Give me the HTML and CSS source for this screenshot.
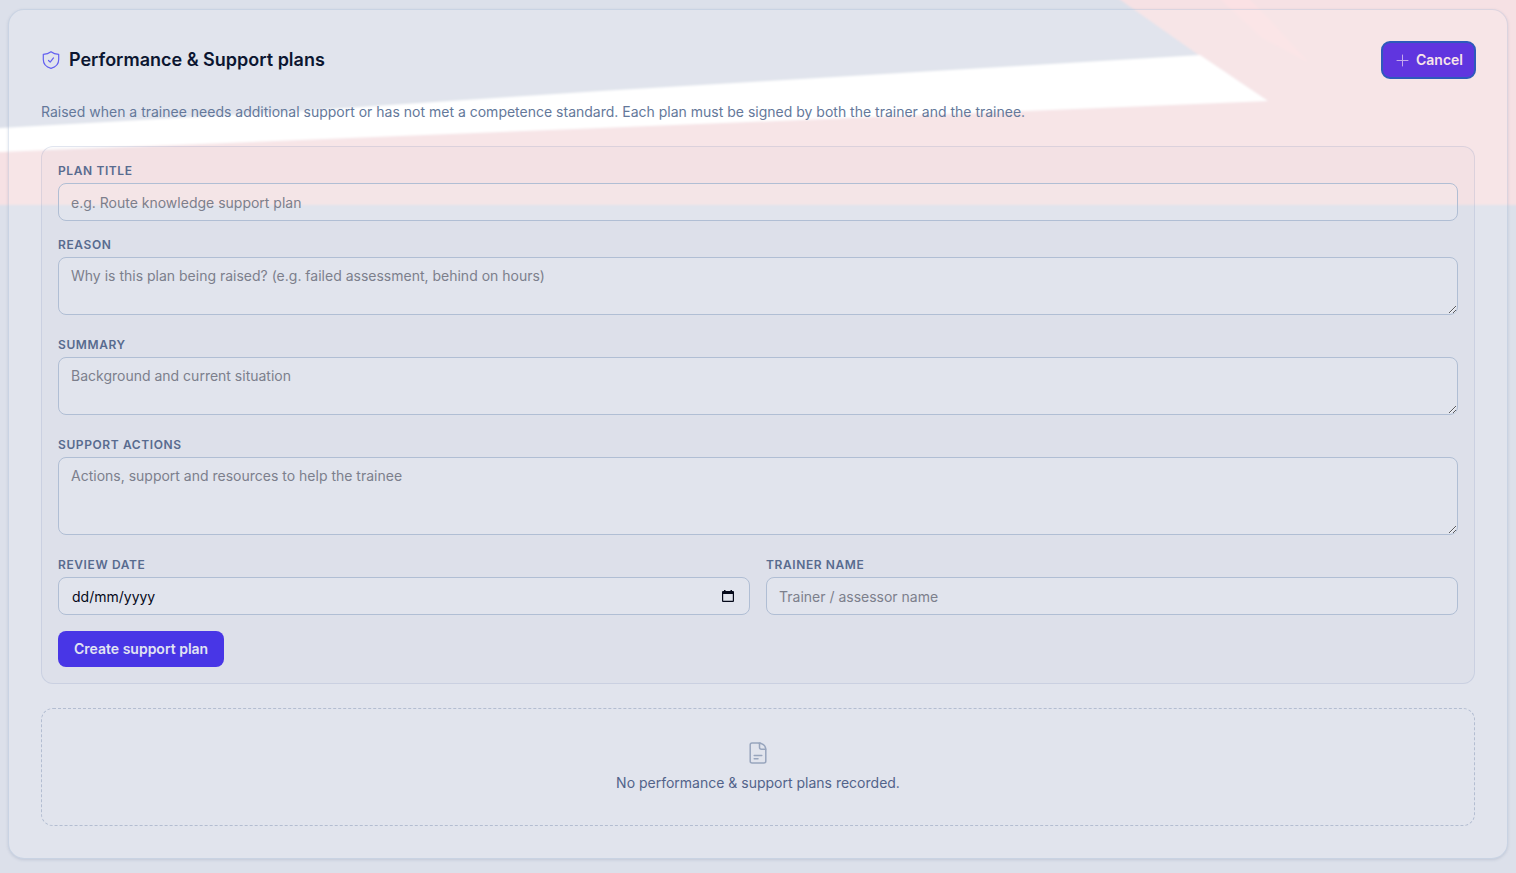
FILE: index.html
```
<!DOCTYPE html>
<html lang="en-GB">
<head>
    <meta charset="UTF-8">
    <meta name="viewport" content="width=device-width, initial-scale=1.0">
    <title>Performance &amp; Support plans</title>
    <link rel="stylesheet" href="styles.css">
</head>
<body>
    <!-- Flag backdrop -->
    <svg class="backdrop" viewBox="0 0 1516 210" preserveAspectRatio="none" aria-hidden="true">
        <defs>
            <filter id="soften" x="-5%" y="-5%" width="110%" height="110%">
                <feGaussianBlur stdDeviation="1"/>
            </filter>
        </defs>
        <g filter="url(#soften)">
            <path fill="#f6e1e4" d="M-20 152 600 127 1100 107 1240 85 1200 56 1112-6H1540V205H-20Z"/>
            <path fill="#fbe1e4" d="M1215-6H1244L1270 20 1308 62 1262 38Z"/>
            <path fill="#fff" d="M-20 129 0 128 300 111 600 91 900 73 1200 55 1268 101 1100 108 900 116 600 128 300 140 0 152-20 153Z"/>
        </g>
    </svg>

    <main class="card">
        <header class="card-header">
            <h1>
                <svg class="shield" viewBox="0 0 20 20" fill="none" stroke="currentColor" stroke-width="1.200" stroke-linecap="round" stroke-linejoin="round" aria-hidden="true">
                    <path d="M10 1.800C7.800 3.600 5.200 4.300 2.300 4.300V9.600C2.300 14 5.400 17.200 10 18.300 14.600 17.200 17.700 14 17.700 9.600V4.300C14.800 4.300 12.200 3.600 10 1.800Z"/>
                    <path d="M7.500 10.500 9.200 12.200 12.500 7.900"/>
                </svg>
                Performance &amp; Support plans
            </h1>
            <button type="button" class="btn btn-cancel">
                <svg viewBox="0 0 16 16" fill="none" stroke="currentColor" stroke-width="1" stroke-linecap="round" aria-hidden="true">
                    <path d="M8.500 3V14M3 8.500H14"/>
                </svg>
                Cancel
            </button>
        </header>

        <p class="intro">Raised when a trainee needs additional support or has not met a competence standard. Each plan must be signed by both the trainer and the trainee.</p>

        <!-- New plan form -->
        <form class="plan-form">
            <div class="field">
                <label for="title">Plan title</label>
                <input type="text" id="title" placeholder="e.g. Route knowledge support plan">
            </div>
            <div class="field field-area">
                <label for="reason">Reason</label>
                <textarea id="reason" rows="2" placeholder="Why is this plan being raised? (e.g. failed assessment, behind on hours)"></textarea>
            </div>
            <div class="field field-area">
                <label for="summary">Summary</label>
                <textarea id="summary" rows="2" placeholder="Background and current situation"></textarea>
            </div>
            <div class="field field-area">
                <label for="actions">Support actions</label>
                <textarea id="actions" rows="3" placeholder="Actions, support and resources to help the trainee"></textarea>
            </div>
            <div class="columns">
                <div class="field">
                    <label for="review">Review date</label>
                    <div class="date-box">
                        <input type="text" id="review" placeholder="dd/mm/yyyy" inputmode="numeric">
                        <button type="button" aria-label="Choose date">
                            <svg viewBox="0 0 14 14" aria-hidden="true">
                                <path fill="currentColor" fill-rule="evenodd" d="M3 1H4.500V2H9.500V1H11V2H12Q13 2 13 3V12Q13 13 12 13H2Q1 13 1 12V3Q1 2 2 2H3ZM2.200 5V11.800H11.800V5Z"/>
                            </svg>
                        </button>
                    </div>
                </div>
                <div class="field">
                    <label for="trainer">Trainer name</label>
                    <input type="text" id="trainer" placeholder="Trainer / assessor name">
                </div>
            </div>
            <button type="submit" class="btn btn-submit">Create support plan</button>
        </form>

        <!-- Empty state -->
        <section class="empty">
            <svg viewBox="0 0 24 24" fill="none" stroke="currentColor" stroke-width="1.500" stroke-linecap="round" stroke-linejoin="round" aria-hidden="true">
                <path d="M14.500 2H6Q4.200 2 4.200 3.800V20.200Q4.200 22 6 22H18Q19.800 22 19.800 20.200V8Q19 2 11.500 2"/>
                <path d="M13.500 2.200V6.300Q13.500 8.300 15.500 8.300H19.600M8.200 14.500H15.800M8.200 17.700H12"/>
            </svg>
            <p>No performance &amp; support plans recorded.</p>
        </section>
    </main>
</body>
</html>
```
FILE: styles.css
```
* {
    box-sizing: border-box;
}
body {
    position: relative;
    min-height: 100vh;
    margin: 0;
    padding: 9px 8px 14px;
    background-color: #dce0ea;
    font-family: Inter, sans-serif;
    font-size: 14px;
    line-height: 20px;
}
h1, p {
    margin: 0;
}
input, textarea, button {
    font: inherit;
}
.backdrop {
    position: absolute;
    top: 0;
    left: 0;
    width: 100%;
    height: 210px;
    z-index: -1;
}
.card {
    padding: 32px;
    border: 1px solid rgba(120, 150, 190, 0.22);
    border-radius: 16px;
    background-color: rgba(255, 255, 255, 0.14);
    box-shadow: 0 1px 3px rgba(70, 90, 130, 0.18);
}
.card-header {
    display: flex;
    align-items: center;
    justify-content: space-between;
}
h1 {
    display: flex;
    align-items: center;
    gap: 8px;
    color: #0c1631;
    font-size: 18px;
    line-height: 28px;
    font-weight: 600;
}
.shield {
    width: 20px;
    height: 20px;
    color: #6360f0;
}
.btn {
    height: 36px;
    padding: 0 16px;
    border: none;
    border-radius: 8px;
    font-weight: 600;
    cursor: pointer;
}
.btn-cancel {
    display: flex;
    align-items: center;
    gap: 6px;
    padding: 0 12px;
    background-color: #6035df;
    color: #f8e4e9;
    outline: 2px solid #2d5abb;
    outline-offset: -1px;
}
.btn-cancel svg {
    width: 16px;
    height: 16px;
    color: #c5a9ec;
}
.btn-submit {
    background-color: #4836e6;
    color: #e1e4f2;
}
.intro {
    margin: 24px 0;
    color: #64789a;
}
.plan-form {
    padding: 16px;
    border: 1px solid rgba(130, 150, 190, 0.22);
    border-radius: 12px;
    background-color: rgba(40, 50, 120, 0.02);
}
.field {
    display: flex;
    flex-direction: column;
    gap: 4px;
    margin-bottom: 16px;
}
.field-area {
    margin-bottom: 22px;
}
label {
    color: #586b8f;
    font-size: 12px;
    line-height: 16px;
    font-weight: 600;
    letter-spacing: 0.05em;
    text-transform: uppercase;
}
.field input, textarea {
    display: block;
    width: 100%;
    padding: 8px 12px;
    border: 1px solid #b0bed4;
    border-radius: 8px;
    background-color: rgba(255, 255, 255, 0.14);
    color: #05091a;
}
.field input {
    height: 38px;
}
textarea {
    resize: vertical;
}
::placeholder {
    color: #7c7f8c;
    opacity: 1;
}
.columns {
    display: grid;
    grid-template-columns: 1fr 1fr;
    gap: 16px;
}
.date-box {
    position: relative;
}
.date-box input {
    padding-left: 13px;
}
.date-box input::placeholder {
    color: #05091a;
}
.date-box button {
    position: absolute;
    top: 12px;
    right: 15px;
    width: 14px;
    height: 14px;
    padding: 0;
    border: none;
    background: none;
    color: #05091a;
}
.date-box svg {
    display: block;
}
.empty {
    display: flex;
    flex-direction: column;
    align-items: center;
    gap: 8px;
    margin-top: 24px;
    padding: 32px;
    border: 1px dashed #b3bdd1;
    border-radius: 12px;
    color: #52638a;
}
.empty svg {
    width: 24px;
    height: 24px;
    color: #98a5bd;
}
```
